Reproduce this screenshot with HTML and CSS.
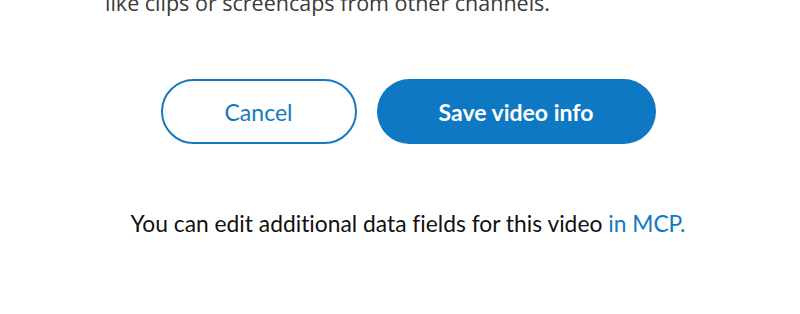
FILE: index.html
```html
<!DOCTYPE html>
<html>
<head>
<meta charset="utf-8">
<link rel="stylesheet" href="styles.css">
</head>
<body>
<div class="panel">
  <p class="note">like clips or screencaps from other channels.</p>
  <div class="actions">
    <button class="btn btn-outline">Cancel</button>
    <button class="btn btn-primary">Save video info</button>
  </div>
  <p class="footer">You can edit additional data fields for this video <a href="#">in MCP.</a></p>
</div>
</body>
</html>
```

FILE: styles.css
```css
html, body {
  margin: 0;
  padding: 0;
  background: #ffffff;
}
.panel {
  width: 606px;
  margin-left: 105px;
  display: flex;
  flex-direction: column;
}
.note {
  margin: -12px 0 0 0;
  font-family: "Open Sans", sans-serif;
  font-size: 21.5px;
  line-height: 30px;
  color: #3a3a3a;
}
.actions {
  display: flex;
  justify-content: center;
  gap: 20px;
  margin-top: 61px;
}
.btn {
  height: 65px;
  border-radius: 33px;
  font-family: Lato, sans-serif;
  font-size: 23px;
  cursor: pointer;
  box-sizing: border-box;
}
.btn-outline {
  width: 196px;
  background: #ffffff;
  border: 2px solid #1479c1;
  color: #1479c1;
}
.btn-primary {
  width: 279px;
  background: #0e78c2;
  border: none;
  color: #ffffff;
  font-weight: 700;
}
.footer {
  margin: 64px 0 0 0;
  text-align: center;
  font-family: Lato, sans-serif;
  font-size: 22.8px;
  line-height: 30px;
  color: #111111;
  font-variant-ligatures: none;
}
.footer a {
  color: #1479c1;
  text-decoration: none;
}
```
